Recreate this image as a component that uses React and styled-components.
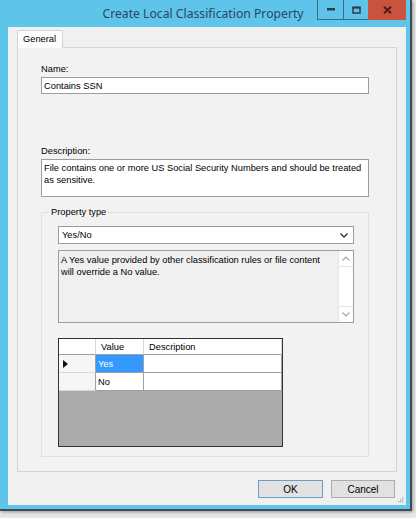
import React from 'react';
import styled, { createGlobalStyle } from 'styled-components';

const Global = createGlobalStyle`
  html, body { margin: 0; padding: 0; background: #e6e6e6; }
  body { font-family: "Liberation Sans", Arial, sans-serif; }
  * { box-sizing: border-box; }
`;

const Page = styled.div`
  width: 416px;
  height: 518px;
  overflow: hidden;
  background: #e6e6e6;
`;

const Window = styled.div`
  width: 412px;
  height: 511px;
  background: #5fc4e9;
  border-right: 2px solid #3f4a52;
  border-bottom: 2px solid #3f4a52;
  box-shadow: 1px 1px 3px rgba(0, 0, 0, 0.35);
  display: flex;
  flex-direction: column;
`;

const TitleBar = styled.div`
  height: 27px;
  flex: none;
  display: grid;
  grid-template-columns: 1fr auto 1fr;
  align-items: start;
  padding-right: 4px;
`;

const Title = styled.div`
  grid-column: 2;
  font-family: "Segoe UI", "Noto Sans", sans-serif;
  font-size: 12.2px;
  line-height: 27px;
  color: #2c4664;
  white-space: nowrap;
`;

const Controls = styled.div`
  grid-column: 3;
  justify-self: end;
  display: flex;
  height: 20px;
`;

const CtlButton = styled.div`
  width: ${(p) => p.$w}px;
  height: 20px;
  display: flex;
  align-items: center;
  justify-content: center;
  background: ${(p) => (p.$close ? '#c8533f' : 'transparent')};
  border-left: ${(p) => (p.$close ? 'none' : '1px solid #3b6c84')};
  border-bottom: ${(p) => (p.$close ? 'none' : '1px solid #3b6c84')};
`;

const Client = styled.div`
  position: relative;
  flex: 1;
  margin: 0 4px 4px 8px;
  background: #f0f0f0;
  display: flex;
  flex-direction: column;
  padding: 3px 9px 7px 9px;
  font-size: 9.3px;
  color: #000;
`;

const TabStrip = styled.div`
  display: flex;
  height: 17px;
  flex: none;
`;

const Tab = styled.div`
  width: 46px;
  height: 18px;
  background: #fcfcfc;
  border: 1px solid #d5d5d5;
  border-bottom: none;
  padding: 3px 0 0 5px;
  position: relative;
  z-index: 1;
`;

const TabPanel = styled.div`
  height: 425px;
  flex: none;
  border: 1px solid #d5d5d5;
  background: #f2f2f2;
  padding: 15px 27px 0 23px;
  display: flex;
  flex-direction: column;
`;

const Label = styled.div`
  line-height: 12px;
  height: 12px;
  margin-top: ${(p) => p.$mt || 0}px;
`;

const TextBox = styled.div`
  margin-top: 2px;
  height: ${(p) => p.$h}px;
  background: #fff;
  border: 1px solid #9d9d9d;
  padding: 2px 2px 0 2px;
  line-height: 12px;
  white-space: nowrap;
  overflow: hidden;
`;

const Group = styled.fieldset`
  margin: 9px 0 0 0;
  border: 1px solid #e0e0e0;
  padding: 2px 14px 9px 16px;
  display: flex;
  flex-direction: column;
`;

const Legend = styled.legend`
  margin-left: -9px;
  padding: 0 2px;
  line-height: 12px;
`;

const Select = styled.div`
  margin-top: 6px;
  height: 18px;
  background: #fff;
  border: 1px solid #9d9d9d;
  display: flex;
  align-items: center;
  justify-content: space-between;
  padding: 0 5px 0 3px;
`;

const InfoBox = styled.div`
  margin-top: 6px;
  height: 73px;
  background: #f0f0f0;
  border: 1px solid #9d9d9d;
  display: flex;
`;

const InfoText = styled.div`
  flex: 1;
  padding: 3px 2px 0 2px;
  line-height: 12px;
  white-space: nowrap;
`;

const ScrollBar = styled.div`
  width: 15px;
  background: #fff;
  border-left: 1px solid #e6e6e6;
  display: flex;
  flex-direction: column;
  justify-content: space-between;
`;

const ScrollBtn = styled.div`
  height: 16px;
  display: flex;
  align-items: center;
  justify-content: center;
  border-${(p) => (p.$down ? 'top' : 'bottom')}: 1px solid #e6e6e6;
`;

const Grid = styled.div`
  margin-top: 15px;
  width: 225px;
  height: 109px;
  border: 1px solid #333;
  background: #ababab;
  display: grid;
  grid-template-columns: 37px 48px 1fr;
  grid-template-rows: 16px 18px 18px;
  align-content: start;
`;

const HeadCell = styled.div`
  background: #fff;
  border-right: 1px solid #d8d8d8;
  border-bottom: 1px solid #a0a0a0;
  padding: 2px 0 0 5px;
  line-height: 12px;
`;

const RowHead = styled.div`
  background: #f6f6f6;
  border-right: 1px solid #a0a0a0;
  border-bottom: 1px solid #d8d8d8;
  display: flex;
  align-items: center;
  padding-left: 4px;
`;

const Cell = styled.div`
  background: ${(p) => (p.$sel ? '#3399ff' : '#fff')};
  color: ${(p) => (p.$sel ? '#fff' : '#000')};
  border-right: 1px solid #a0a0a0;
  border-bottom: 1px solid #a0a0a0;
  padding: 3px 0 0 2px;
  line-height: 12px;
`;

const Footer = styled.div`
  margin-top: 8px;
  display: flex;
  justify-content: flex-end;
  gap: 8px;
  padding-right: 2px;
`;

const Button = styled.div`
  width: ${(p) => p.$w}px;
  height: 18px;
  background: #e1e1e1;
  border: 1px solid ${(p) => (p.$default ? '#6f9cc4' : '#adadad')};
  display: flex;
  align-items: center;
  justify-content: center;
  font-size: 10px;
`;

const Grip = styled.svg`
  position: absolute;
  right: 2px;
  bottom: 2px;
`;

const Chevron = ({ up }) => (
  <svg width="8" height="5" viewBox="0 0 8 5">
    <polyline
      points={up ? '0.5,4.5 4,1 7.5,4.5' : '0.5,0.5 4,4 7.5,0.5'}
      fill="none"
      stroke="#a6a6a6"
      strokeWidth="1.2"
    />
  </svg>
);

export default function App() {
  return (
    <Page>
      <Global />
      <Window>
        <TitleBar>
          <Title>Create Local Classification Property</Title>
          <Controls>
            <CtlButton $w={26}>
              <svg width="8" height="3" viewBox="0 0 8 3">
                <rect x="0" y="0" width="8" height="2.5" fill="#2d3d50" />
              </svg>
            </CtlButton>
            <CtlButton $w={25}>
              <svg width="9" height="8" viewBox="0 0 9 8">
                <rect x="1" y="1.5" width="7" height="5.5" fill="none" stroke="#2d3d50" strokeWidth="1.5" />
                <rect x="0.5" y="0.5" width="8" height="2" fill="#2d3d50" />
              </svg>
            </CtlButton>
            <CtlButton $w={38} $close>
              <svg width="9" height="8" viewBox="0 0 9 8">
                <path d="M1 0.8 L8 7.2 M8 0.8 L1 7.2" stroke="#4a2018" strokeWidth="2" />
              </svg>
            </CtlButton>
          </Controls>
        </TitleBar>
        <Client>
          <TabStrip>
            <Tab>General</Tab>
          </TabStrip>
          <TabPanel>
            <Label>Name:</Label>
            <TextBox $h={17}>Contains SSN</TextBox>
            <Label $mt={51}>Description:</Label>
            <TextBox $h={38}>
              File contains one or more US Social Security Numbers and should be treated
              <br />
              as sensitive.
            </TextBox>
            <Group>
              <Legend>Property type</Legend>
              <Select>
                <span>Yes/No</span>
                <svg width="8" height="5" viewBox="0 0 8 5">
                  <polyline points="0.5,0.5 4,4 7.5,0.5" fill="none" stroke="#333" strokeWidth="1.3" />
                </svg>
              </Select>
              <InfoBox>
                <InfoText>
                  A Yes value provided by other classification rules or file content
                  <br />
                  will override a No value.
                </InfoText>
                <ScrollBar>
                  <ScrollBtn>
                    <Chevron up />
                  </ScrollBtn>
                  <ScrollBtn $down>
                    <Chevron />
                  </ScrollBtn>
                </ScrollBar>
              </InfoBox>
              <Grid>
                <HeadCell />
                <HeadCell>Value</HeadCell>
                <HeadCell>Description</HeadCell>
                <RowHead>
                  <svg width="5" height="8" viewBox="0 0 5 8">
                    <polygon points="0,0 5,4 0,8" fill="#111" />
                  </svg>
                </RowHead>
                <Cell $sel>Yes</Cell>
                <Cell />
                <RowHead />
                <Cell>No</Cell>
                <Cell />
              </Grid>
            </Group>
          </TabPanel>
          <Footer>
            <Button $w={65} $default>OK</Button>
            <Button $w={64}>Cancel</Button>
          </Footer>
          <Grip width="6" height="6" viewBox="0 0 6 6">
            <rect x="4" y="0" width="1.5" height="1.5" fill="#b8b8b8" />
            <rect x="2" y="2" width="1.5" height="1.5" fill="#b8b8b8" />
            <rect x="4" y="2" width="1.5" height="1.5" fill="#b8b8b8" />
            <rect x="0" y="4" width="1.5" height="1.5" fill="#b8b8b8" />
            <rect x="2" y="4" width="1.5" height="1.5" fill="#b8b8b8" />
            <rect x="4" y="4" width="1.5" height="1.5" fill="#b8b8b8" />
          </Grip>
        </Client>
      </Window>
    </Page>
  );
}
